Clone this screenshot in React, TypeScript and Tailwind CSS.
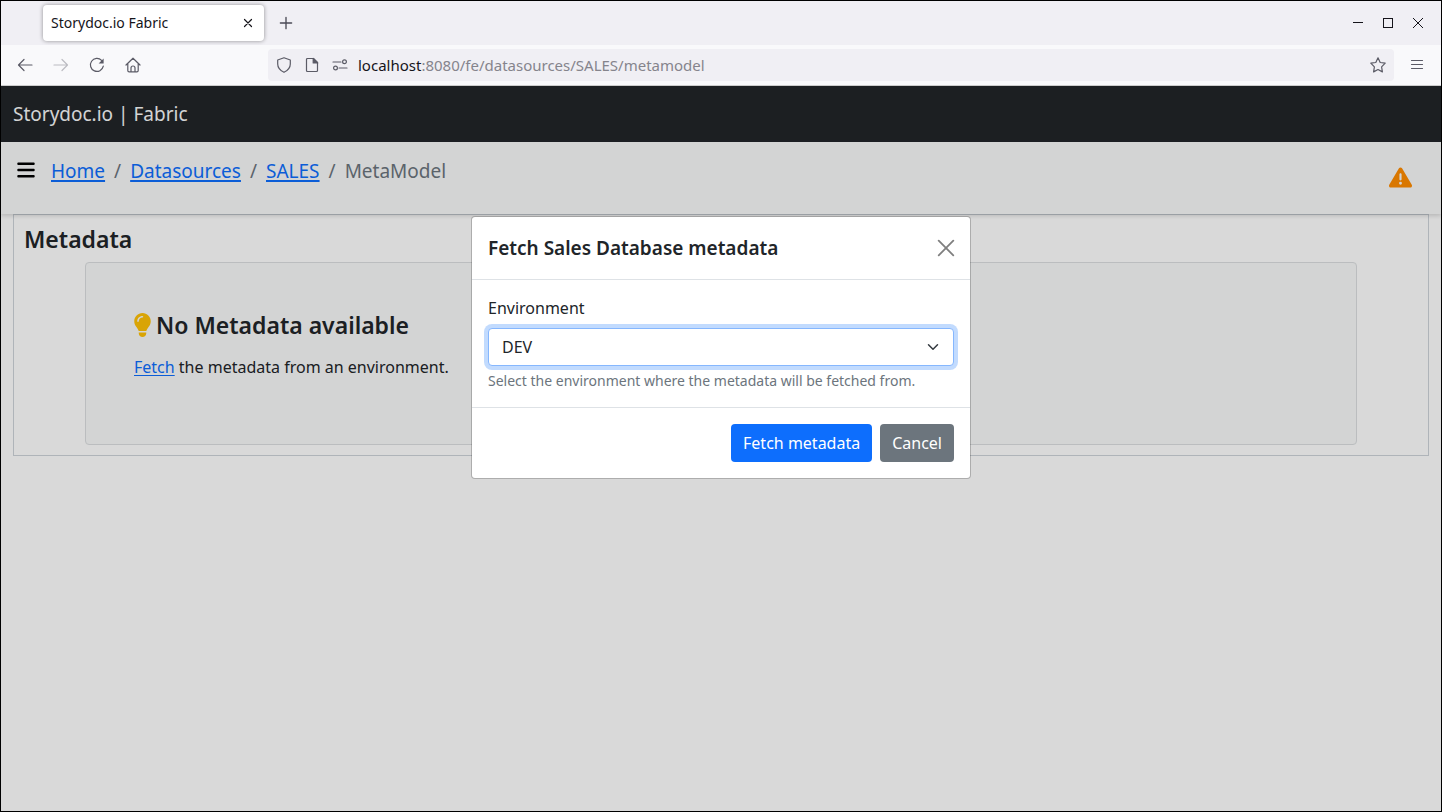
import type { ReactNode } from "react";
import { FaBars, FaLightbulb, FaTriangleExclamation } from "react-icons/fa6";

function ChromeIcon({ children, className = "size-4" }: { children: ReactNode; className?: string }) {
  return (
    <svg viewBox="0 0 16 16" fill="none" stroke="currentColor" strokeWidth="1.2" strokeLinecap="round" strokeLinejoin="round" className={className} aria-hidden="true">
      {children}
    </svg>
  );
}

function TabStrip() {
  return (
    <div className="flex h-11 items-center bg-[#f0eff4] pr-[15px] pl-[42px] text-[#15141a]">
      <div className="flex h-9 w-[221px] items-center justify-between rounded bg-white px-2 shadow-[0_0_4px_rgba(0,0,0,0.4)]">
        <span className="text-sm">Storydoc.io Fabric</span>
        <button type="button" aria-label="Close tab">
          <ChromeIcon>
            <path d="M4.500 4.500l7 7M11.500 4.500l-7 7" />
          </ChromeIcon>
        </button>
      </div>
      <button type="button" aria-label="New tab" className="ml-[13px] text-[#4a4a55]">
        <ChromeIcon className="size-[18px]">
          <path d="M8 3v10M3 8h10" />
        </ChromeIcon>
      </button>
      <div className="ml-auto flex items-center gap-[14px]">
        <button type="button" aria-label="Minimize">
          <svg viewBox="0 0 16 16" className="size-4" stroke="currentColor" shapeRendering="crispEdges" aria-hidden="true">
            <path d="M3 7.500h10" />
          </svg>
        </button>
        <button type="button" aria-label="Maximize">
          <svg viewBox="0 0 16 16" className="size-4" fill="none" stroke="currentColor" shapeRendering="crispEdges" aria-hidden="true">
            <path d="M3.500 3.500h9v9h-9z" />
          </svg>
        </button>
        <button type="button" aria-label="Close window">
          <svg viewBox="0 0 16 16" className="size-4" fill="none" stroke="currentColor" aria-hidden="true">
            <path d="M3 3l10 10M13 3L3 13" />
          </svg>
        </button>
      </div>
    </div>
  );
}

function Toolbar() {
  return (
    <div className="flex h-[41px] items-center border-b border-[#cccccc] bg-[#f9f9fb] px-4 text-[#5b5b66]">
      <div className="flex items-center gap-5">
        <button type="button" aria-label="Back">
          <ChromeIcon>
            <path d="M15 8H1.500M7 2.500L1.500 8L7 13.500" />
          </ChromeIcon>
        </button>
        <button type="button" aria-label="Forward" className="text-[#bcbcc2]">
          <ChromeIcon>
            <path d="M1 8h13.500M9 2.500L14.500 8L9 13.500" />
          </ChromeIcon>
        </button>
        <button type="button" aria-label="Reload">
          <ChromeIcon>
            <path d="M14.300 9.200A6.500 6.500 0 1 1 12.600 3.400" />
            <path d="M14.600 1.500v5h-5z" fill="currentColor" stroke="none" />
          </ChromeIcon>
        </button>
        <button type="button" aria-label="Home">
          <ChromeIcon>
            <path d="M1 8L8 1.200L15 8M2.800 6.500V13.500a1.300 1.300 0 0 0 1.300 1.300h7.800a1.300 1.300 0 0 0 1.300-1.300V6.500M6 14.500V11a2 2 0 0 1 4 0v3.500" />
          </ChromeIcon>
        </button>
      </div>
      <div className="mr-[15px] ml-[127px] flex h-8 flex-1 items-center gap-3 rounded bg-[#f0eff4] px-2">
        <ChromeIcon>
          <path d="M8 .8L14.300 3V7c0 4-2.500 6.500-6.300 8.300C4.200 13.500 1.700 11 1.700 7V3z" />
        </ChromeIcon>
        <ChromeIcon>
          <path d="M3.500 1.500H9.500L13.500 5.500V13.500a1 1 0 0 1-1 1h-9a1 1 0 0 1-1-1v-11a1 1 0 0 1 1-1z" />
          <path d="M9.200 1.500v4.500h4.500z" fill="currentColor" />
        </ChromeIcon>
        <ChromeIcon>
          <path d="M1 5h8M7 11h8" />
          <circle cx="12.500" cy="4.800" r="1.900" />
          <circle cx="3.500" cy="11" r="1.900" />
        </ChromeIcon>
        <span className="-ml-0.5 flex-1 text-[15px] text-[#85848c]">
          <span className="text-[#15141a]">localhost</span>:8080/fe/datasources/SALES/metamodel
        </span>
        <button type="button" aria-label="Bookmark this page">
          <ChromeIcon>
            <path d="M8 .8L10.200 5.500L15.200 6.200L11.600 9.800L12.400 14.900L8 12.500L3.600 14.900L4.400 9.800L.8 6.200L5.800 5.500z" />
          </ChromeIcon>
        </button>
      </div>
      <button type="button" aria-label="Application menu">
        <ChromeIcon>
          <path d="M2.500 3.500h11M2.500 7.500h11M2.500 11.500h11" />
        </ChromeIcon>
      </button>
    </div>
  );
}

function Breadcrumb() {
  const links = ["Home", "Datasources", "SALES"];
  return (
    <nav aria-label="Breadcrumb" className="text-[19px] leading-7 text-[#6c757d]">
      <ol className="flex gap-[9px]">
        {links.map((name) => (
          <li key={name} className="flex gap-[9px]">
            <a href="#" className="text-[#0d6efd] underline decoration-2 underline-offset-2">{name}</a>
            <span>/</span>
          </li>
        ))}
        <li aria-current="page">MetaModel</li>
      </ol>
    </nav>
  );
}

function FetchDialog() {
  return (
    <div role="dialog" aria-modal="true" aria-labelledby="dialog-title" className="w-[500px] rounded border border-black/20 bg-white bg-clip-padding">
      <div className="flex items-center justify-between border-b border-[#dee2e6] p-4">
        <h2 id="dialog-title" className="text-[19px] leading-[30px] font-semibold">Fetch Sales Database metadata</h2>
        <button type="button" aria-label="Close" className="text-black/50">
          <svg viewBox="0 0 16 16" className="size-4" fill="none" stroke="currentColor" strokeWidth="1.800" strokeLinecap="round" overflow="visible" aria-hidden="true">
            <path d="M.7 .7l14.600 14.600M15.300 .7L.7 15.300" />
          </svg>
        </button>
      </div>
      <div className="p-4">
        <label htmlFor="environment" className="mb-2 block leading-6">Environment</label>
        <div className="relative">
          <select id="environment" aria-describedby="environment-help" className="h-[38px] w-full appearance-none rounded border border-[#86b7fe] bg-white px-[13px] shadow-[0_0_0_4px_rgba(13,110,253,0.25)] outline-none">
            <option>DEV</option>
          </select>
          <svg viewBox="0 0 16 16" className="pointer-events-none absolute top-[13px] right-[15px] size-3" fill="none" stroke="#343a40" strokeWidth="2" strokeLinecap="round" strokeLinejoin="round" aria-hidden="true">
            <path d="M2 5l6 6 6-6" />
          </svg>
        </div>
        <p id="environment-help" className="mt-1 text-sm leading-[21px] text-[#6c757d]">Select the environment where the metadata will be fetched from.</p>
      </div>
      <div className="flex justify-end gap-2 border-t border-[#dee2e6] p-4">
        <button type="button" className="h-[38px] rounded bg-[#0d6efd] px-3 text-white">Fetch metadata</button>
        <button type="button" className="h-[38px] rounded bg-[#6c757d] px-3 text-white">Cancel</button>
      </div>
    </div>
  );
}

export default function App() {
  return (
    <div className="flex min-h-screen flex-col border border-black bg-white font-['Noto_Sans',sans-serif] text-[#212529]">
      <TabStrip />
      <Toolbar />
      <div className="relative flex-1">
        <header className="flex h-14 items-center bg-[#212529] px-3 text-[19px] text-[#f8f9fa]">Storydoc.io | Fabric</header>
        <div className="relative flex h-[72px] items-start bg-[#f8f9fa] px-4 pt-[15px] shadow-[0_2px_4px_rgba(0,0,0,0.15)]">
          <button type="button" aria-label="Toggle menu" className="mt-[3px] mr-4 text-black">
            <FaBars className="h-5 w-[18px]" />
          </button>
          <Breadcrumb />
          <FaTriangleExclamation className="mt-[9px] mr-[13px] ml-auto size-[23px] text-[#ff8c00]" aria-label="Warning" />
        </div>
        <main className="px-3">
          <section className="border border-[#ced4da] px-[10px] pb-[10px]">
            <h1 className="pt-2 pb-[7px] text-[23px] leading-8 font-semibold">Metadata</h1>
            <div className="mx-[61px] h-[183px] rounded border border-[#dcdfe1] bg-[#f8f9fa] p-12">
              <h2 className="flex items-center gap-[5px] text-[23px] leading-7 font-semibold">
                <FaLightbulb className="h-6 w-[17px] text-[#ffc107]" preserveAspectRatio="xMidYMid slice" aria-hidden="true" />
                No Metadata available
              </h2>
              <p className="mt-4 leading-6">
                <a href="#" className="text-[#0d6efd] underline underline-offset-2">Fetch</a> the metadata from an environment.
              </p>
            </div>
          </section>
        </main>
        <div className="absolute inset-0 flex items-start justify-center bg-black/15 pt-[130px]">
          <FetchDialog />
        </div>
      </div>
    </div>
  );
}
